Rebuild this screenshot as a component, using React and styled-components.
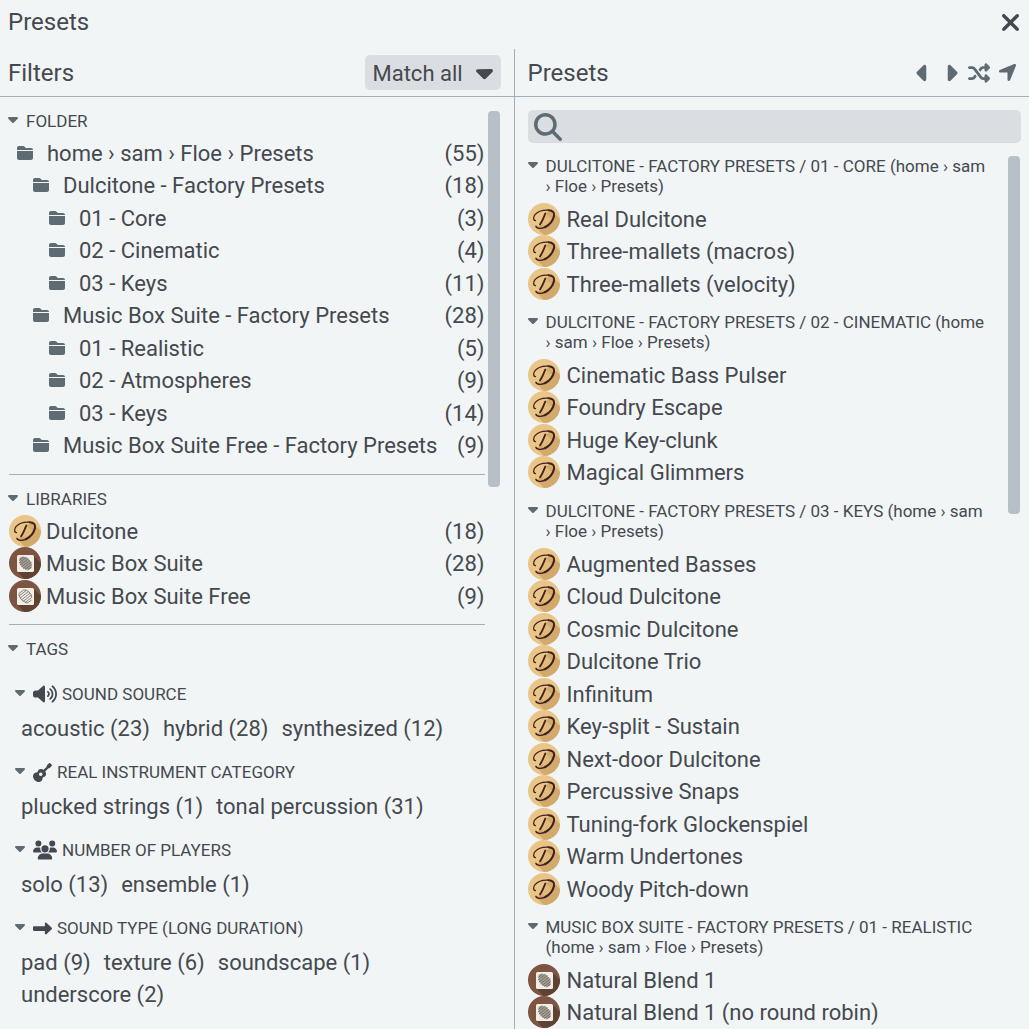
import React from "react";
import styled, { createGlobalStyle } from "styled-components";
import {
  FaCaretDown,
  FaCaretLeft,
  FaCaretRight,
  FaFolderClosed,
  FaGuitar,
  FaLocationArrow,
  FaMagnifyingGlass,
  FaRightLong,
  FaShuffle,
  FaUsers,
  FaVolumeHigh,
  FaXmark,
} from "react-icons/fa6";

const color = {
  background: "#f1f5f6",
  text: "#45494f",
  icon: "#5f6b73",
  line: "#a3afb7",
  control: "#dadee2",
  thumb: "#b8c0c7",
};

const GlobalStyle = createGlobalStyle`
  *, *::before, *::after { box-sizing: border-box; }
  body {
    margin: 0;
    background: ${color.background};
    color: ${color.text};
    font-family: Roboto, "Liberation Sans", sans-serif;
    font-size: 22px;
    line-height: 32px;
  }
  button, input, select { font: inherit; color: inherit; }
  h1, h2, h3 { margin: 0; font-weight: 400; }
`;

const PlainButton = styled.button`
  display: flex;
  padding: 0;
  border: 0;
  background: none;
  text-align: left;
  cursor: pointer;
`;

const Window = styled.div`
  display: flex;
  flex-direction: column;
  height: 100vh;
  overflow: hidden;
`;

const TitleBar = styled.header`
  display: flex;
  flex: none;
  align-items: center;
  justify-content: space-between;
  height: 44px;
  margin-bottom: 5px;
  padding: 0 5px 0 8px;
`;

const Title = styled.h1`
  font-size: 24px;
`;

const IconButton = styled(PlainButton)`
  align-items: center;
  justify-content: center;
  width: 28px;
  height: 32px;
  color: ${(p) => (p.$strong ? color.text : color.icon)};
`;

const Columns = styled.main`
  display: grid;
  flex: 1;
  grid-template-columns: 1fr 1fr;
  min-height: 0;
`;

const Column = styled.section`
  display: flex;
  flex-direction: column;
  min-width: 0;
  min-height: 0;
  border-right: ${(p) => (p.$divided ? `1px solid ${color.line}` : "0")};
`;

const ColumnHeader = styled.div`
  display: flex;
  flex: none;
  align-items: center;
  justify-content: space-between;
  height: 48px;
  padding: 0 ${(p) => p.$right}px 0 ${(p) => p.$left}px;
  border-bottom: 1px solid ${color.line};
`;

const ColumnTitle = styled.h2`
  font-size: 24px;
`;

const Toolbar = styled.div`
  display: flex;
`;

const SelectBox = styled.label`
  position: relative;
  display: flex;
  align-items: center;

  svg {
    position: absolute;
    right: 3px;
    pointer-events: none;
  }
`;

const Select = styled.select`
  width: 136px;
  height: 35px;
  padding: 2px 32px 0 8px;
  border: 0;
  border-radius: 5px;
  background: ${color.control};
  appearance: none;
`;

const SearchBox = styled.label`
  display: flex;
  flex: none;
  align-items: center;
  gap: 6px;
  height: 33px;
  margin: 13px 8px 13px 13px;
  padding: 0 6px;
  border-radius: 5px;
  background: ${color.control};
  color: ${color.icon};
`;

const SearchInput = styled.input`
  flex: 1;
  min-width: 0;
  padding: 0;
  border: 0;
  outline: 0;
  background: none;
`;

const Pane = styled.div`
  display: flex;
  flex: 1;
  gap: 3px;
  min-height: 0;
  padding: ${(p) => p.$padding};
`;

const Scroller = styled.div`
  flex: 1;
  min-width: 0;
  overflow-y: auto;
  scrollbar-width: none;
`;

const Track = styled.div`
  width: 12px;
`;

const Thumb = styled.div`
  height: 41%;
  border-radius: 4px;
  background: ${color.thumb};
`;

const Heading = styled(PlainButton)`
  align-items: flex-start;
  gap: 5px;
  width: 100%;
  padding-right: 15px;
  font-size: 17px;
  line-height: 20px;

  > svg {
    flex: none;
    color: ${color.icon};
  }
`;

const HeadingIcon = styled.span`
  display: flex;
  align-items: center;
  height: 20px;
`;

const Rule = styled.hr`
  height: 1px;
  margin: 12px 0 14px 4px;
  border: 0;
  background: ${color.line};
`;

const List = styled.ul`
  margin: ${(p) => p.$top}px 0 0;
  padding: 0;
  list-style: none;

  > li {
    height: 32px;
  }

  > li:nth-child(even) {
    height: 33px;
  }
`;

const Row = styled(PlainButton)`
  align-items: center;
  gap: ${(p) => p.$gap}px;
  width: 100%;
  height: 32px;
  padding-left: ${(p) => p.$indent}px;
  white-space: nowrap;

  svg {
    flex: none;
    color: ${color.icon};
  }

  span {
    padding-top: 2px;
  }
`;

const Count = styled.span`
  margin-left: auto;
`;

const TagGroups = styled.div`
  display: flex;
  flex-direction: column;
  gap: 17px;
  padding: 25px 0 17px 7px;
`;

const Tags = styled.div`
  display: flex;
  flex-wrap: wrap;
  column-gap: 13px;
  margin-top: 9px;
  padding-left: 9px;
`;

const PresetGroup = styled.section`
  margin-bottom: 12px;
`;

const Badge = styled.svg`
  display: block;
  width: 32px;
  height: 32px;
  border-radius: 50%;
`;

function DulcitoneBadge() {
  return (
    <Badge viewBox="0 0 32 32" aria-hidden="true">
      <rect width="32" height="32" fill="#e9c688" />
      <path d="M17.500 10 L24 8 L33 17 V33 H17 L8.500 24.500 L12 22 Z" fill="#d1aa6c" />
      <path d="M18 10.500 L24.500 17 L20 22.500 L12.500 22 Z" fill="#e0bb7c" />
      <g fill="none" stroke="#43211f" strokeLinecap="round" strokeLinejoin="round">
        <path strokeWidth="1.300" d="M7.500 17.700 C5.300 17.500 4.900 14.300 7 11.700 C9.800 8.400 15.500 6.900 20.500 7.200" />
        <path strokeWidth="2.100" d="M20.500 7.200 C24.800 7.400 26.800 9.600 26 13 C24.900 17.800 21.300 22 17 24.200" />
        <path strokeWidth="1.400" d="M17 24.200 C13.500 25.900 8.600 25.800 7.900 23.300" />
        <path strokeWidth="1.800" d="M17.300 10.500 C15.800 14.200 14.200 18.600 12 21.400" />
      </g>
    </Badge>
  );
}

function MusicBoxBadge({ free }) {
  return (
    <Badge viewBox="0 0 32 32" aria-hidden="true">
      <rect width="32" height="32" fill="#7e5542" />
      <path d="M24 8 L33 17 V33 H16 L8.500 24.500 Z" fill="#5f4232" />
      <rect x="8" y="8" width="17" height="17" rx="1.500" fill="#f1eee4" />
      {!free && <path d="M10.500 11 C12.500 8.800 17 9.500 19.500 12 L22.500 15.500 V21 C20.500 23.500 16.500 23 14 21 L11 17.500 Z" fill="#a29d95" />}
      <g fill="none" stroke={free ? "#6d6862" : "#77726c"} strokeWidth={free ? 0.8 : 1}>
        <path d="M10 13.500 L14.500 10 M10 16 L17.500 10.300 M11 18 L19.500 11.600 M12.500 19.800 L21 13.300 M14 21.500 L22.300 15 M16 22.500 L22.700 17.500 M18.500 23 L22.500 20" />
        {free && <path d="M10 13.500 C9.500 16.500 12.500 21.500 18.500 23 M14.500 10 C18.500 9.500 22.500 13.500 22.700 17.500" />}
      </g>
    </Badge>
  );
}

const folders = [
  [0, "home › sam › Floe › Presets", 55],
  [1, "Dulcitone - Factory Presets", 18],
  [2, "01 - Core", 3],
  [2, "02 - Cinematic", 4],
  [2, "03 - Keys", 11],
  [1, "Music Box Suite - Factory Presets", 28],
  [2, "01 - Realistic", 5],
  [2, "02 - Atmospheres", 9],
  [2, "03 - Keys", 14],
  [1, "Music Box Suite Free - Factory Presets", 9],
];

const libraries = [
  ["Dulcitone", 18, <DulcitoneBadge />],
  ["Music Box Suite", 28, <MusicBoxBadge />],
  ["Music Box Suite Free", 9, <MusicBoxBadge free />],
];

const tagGroups = [
  ["SOUND SOURCE", <FaVolumeHigh size={24} />, ["acoustic (23)", "hybrid (28)", "synthesized (12)"]],
  ["REAL INSTRUMENT CATEGORY", <FaGuitar size={19} />, ["plucked strings (1)", "tonal percussion (31)"]],
  ["NUMBER OF PLAYERS", <FaUsers size={24} />, ["solo (13)", "ensemble (1)"]],
  ["SOUND TYPE (LONG DURATION)", <FaRightLong size={19} />, ["pad (9)", "texture (6)", "soundscape (1)", "underscore (2)"]],
];

const presetGroups = [
  {
    title: "DULCITONE - FACTORY PRESETS / 01 - CORE (home › sam › Floe › Presets)",
    badge: DulcitoneBadge,
    presets: ["Real Dulcitone", "Three-mallets (macros)", "Three-mallets (velocity)"],
  },
  {
    title: "DULCITONE - FACTORY PRESETS / 02 - CINEMATIC (home › sam › Floe › Presets)",
    badge: DulcitoneBadge,
    presets: ["Cinematic Bass Pulser", "Foundry Escape", "Huge Key-clunk", "Magical Glimmers"],
  },
  {
    title: "DULCITONE - FACTORY PRESETS / 03 - KEYS (home › sam › Floe › Presets)",
    badge: DulcitoneBadge,
    presets: [
      "Augmented Basses",
      "Cloud Dulcitone",
      "Cosmic Dulcitone",
      "Dulcitone Trio",
      "Infinitum",
      "Key-split - Sustain",
      "Next-door Dulcitone",
      "Percussive Snaps",
      "Tuning-fork Glockenspiel",
      "Warm Undertones",
      "Woody Pitch-down",
    ],
  },
  {
    title: "MUSIC BOX SUITE - FACTORY PRESETS / 01 - REALISTIC (home › sam › Floe › Presets)",
    badge: MusicBoxBadge,
    presets: ["Natural Blend 1", "Natural Blend 1 (no round robin)"],
  },
];

function SectionHeading({ icon, children }) {
  return (
    <h3>
      <Heading type="button" aria-expanded="true">
        <FaCaretDown size={16} />
        {icon && <HeadingIcon>{icon}</HeadingIcon>}
        <span>{children}</span>
      </Heading>
    </h3>
  );
}

function ScrollPane({ padding, children }) {
  return (
    <Pane $padding={padding}>
      <Scroller>{children}</Scroller>
      <Track aria-hidden="true">
        <Thumb />
      </Track>
    </Pane>
  );
}

function Filters() {
  return (
    <Column $divided>
      <ColumnHeader $left={8} $right={13}>
        <ColumnTitle>Filters</ColumnTitle>
        <SelectBox>
          <Select aria-label="Filter mode" defaultValue="all">
            <option value="all">Match all</option>
          </Select>
          <FaCaretDown size={27} />
        </SelectBox>
      </ColumnHeader>
      <ScrollPane padding="14px 14px 0 5px">
        <SectionHeading>FOLDER</SectionHeading>
        <List $top={6}>
          {folders.map(([level, name, count], i) => (
            <li key={i}>
              <Row type="button" $gap={14} $indent={12 + level * 16}>
                <FaFolderClosed size={16} />
                <span>{name}</span>
                <Count>({count})</Count>
              </Row>
            </li>
          ))}
        </List>
        <Rule />
        <SectionHeading>LIBRARIES</SectionHeading>
        <List $top={6}>
          {libraries.map(([name, count, badge]) => (
            <li key={name}>
              <Row type="button" $gap={5} $indent={4}>
                {badge}
                <span>{name}</span>
                <Count>({count})</Count>
              </Row>
            </li>
          ))}
        </List>
        <Rule />
        <SectionHeading>TAGS</SectionHeading>
        <TagGroups>
          {tagGroups.map(([name, icon, tags]) => (
            <div key={name}>
              <SectionHeading icon={icon}>{name}</SectionHeading>
              <Tags>
                {tags.map((tag) => (
                  <PlainButton type="button" key={tag}>
                    {tag}
                  </PlainButton>
                ))}
              </Tags>
            </div>
          ))}
        </TagGroups>
      </ScrollPane>
    </Column>
  );
}

function Presets() {
  return (
    <Column>
      <ColumnHeader $left={13} $right={8}>
        <ColumnTitle>Presets</ColumnTitle>
        <Toolbar>
          <IconButton type="button" aria-label="Previous preset">
            <FaCaretLeft size={26} />
          </IconButton>
          <IconButton type="button" aria-label="Next preset">
            <FaCaretRight size={26} />
          </IconButton>
          <IconButton type="button" aria-label="Random preset">
            <FaShuffle size={22} />
          </IconButton>
          <IconButton type="button" aria-label="Scroll to current preset">
            <FaLocationArrow size={21} />
          </IconButton>
        </Toolbar>
      </ColumnHeader>
      <SearchBox>
        <FaMagnifyingGlass size={28} />
        <SearchInput type="search" aria-label="Search presets" />
      </SearchBox>
      <ScrollPane padding="0 9px 0 10px">
        {presetGroups.map(({ title, badge: Icon, presets }) => (
          <PresetGroup key={title}>
            <SectionHeading>{title}</SectionHeading>
            <List $top={7}>
              {presets.map((name) => (
                <li key={name}>
                  <Row type="button" $gap={7} $indent={3}>
                    <Icon />
                    <span>{name}</span>
                  </Row>
                </li>
              ))}
            </List>
          </PresetGroup>
        ))}
      </ScrollPane>
    </Column>
  );
}

export default function App() {
  return (
    <>
      <GlobalStyle />
      <Window>
        <TitleBar>
          <Title>Presets</Title>
          <IconButton type="button" aria-label="Close" $strong>
            <FaXmark size={27} />
          </IconButton>
        </TitleBar>
        <Columns>
          <Filters />
          <Presets />
        </Columns>
      </Window>
    </>
  );
}
